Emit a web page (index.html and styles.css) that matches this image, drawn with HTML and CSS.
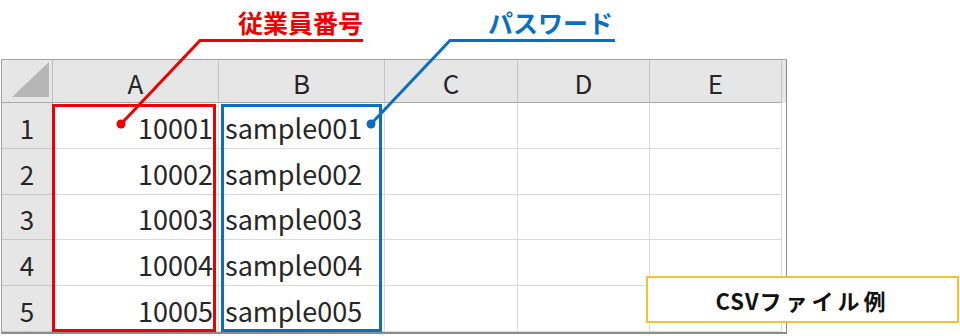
FILE: index.html
```html
<!DOCTYPE html>
<html lang="ja">
<head>
    <meta charset="UTF-8">
    <title>CSVファイル例</title>
    <link rel="stylesheet" href="styles.css">
</head>
<body>
<div class="figure">
    <!-- 見出しラベル -->
    <div class="callouts">
        <div class="callout callout-red">従業員番号</div>
        <div class="callout callout-blue">パスワード</div>
    </div>

    <!-- シート -->
    <div class="sheet">
        <div class="corner"><span class="corner-mark"></span></div>
        <div class="col-head">A</div>
        <div class="col-head">B</div>
        <div class="col-head">C</div>
        <div class="col-head">D</div>
        <div class="col-head">E</div>

        <div class="row-head">1</div>
        <div class="cell num">10001</div>
        <div class="cell">sample001</div>
        <div class="cell"></div><div class="cell"></div><div class="cell"></div>

        <div class="row-head">2</div>
        <div class="cell num">10002</div>
        <div class="cell">sample002</div>
        <div class="cell"></div><div class="cell"></div><div class="cell"></div>

        <div class="row-head">3</div>
        <div class="cell num">10003</div>
        <div class="cell">sample003</div>
        <div class="cell"></div><div class="cell"></div><div class="cell"></div>

        <div class="row-head">4</div>
        <div class="cell num">10004</div>
        <div class="cell">sample004</div>
        <div class="cell"></div><div class="cell"></div><div class="cell"></div>

        <div class="row-head">5</div>
        <div class="cell num">10005</div>
        <div class="cell">sample005</div>
        <div class="cell"></div><div class="cell"></div><div class="cell"></div>
    </div>

    <!-- 引き出し線と枠 -->
    <svg class="leaders" width="960" height="336" viewBox="0 0 960 336">
        <rect x="53.5" y="105.5" width="161" height="225" fill="none" stroke="#ee0000" stroke-width="3"/>
        <rect x="222.5" y="105.5" width="158" height="225" fill="none" stroke="#0a6fc0" stroke-width="3"/>
        <polyline points="363,40.5 200,40.5 121,124" fill="none" stroke="#ee0000" stroke-width="3"/>
        <circle cx="121" cy="124" r="4.5" fill="#ee0000"/>
        <polyline points="615,40.5 450,40.5 371,124" fill="none" stroke="#0a6fc0" stroke-width="3"/>
        <circle cx="371" cy="124" r="4.5" fill="#0a6fc0"/>
    </svg>

    <div class="caption">CSV<span class="caption-kana">ファイル例</span></div>
</div>
</body>
</html>
```

FILE: styles.css
```css
body {
    margin: 0;
    background-color: #fff;
    font-family: "Noto Sans CJK JP", "Noto Sans", sans-serif;
}

.figure {
    position: relative;
    width: 960px;
    height: 336px;
    overflow: hidden;
}

.callouts {
    display: flex;
    gap: 87px;
    height: 59px;
    padding: 8px 0 0 200px;
    box-sizing: border-box;
}

.callout {
    width: 163px;
    text-align: right;
    font-size: 25px;
    line-height: 28px;
    font-weight: bold;
}
.callout-red {
    color: #ee0000;
}
.callout-blue {
    color: #0a6fc0;
}

.sheet {
    display: grid;
    grid-template-columns: 51px 166px 166px 133px 132px 132px;
    grid-template-rows: 43px 46px 46px 45px 46px 46px;
    width: max-content;
    margin-left: 1px;
    padding-right: 4px;
    border-top: 1px solid #a3a3a3;
    border-left: 1px solid #a3a3a3;
    border-right: 1px solid #8c8c8c;
    border-bottom: 2px solid #8c8c8c;
    background: linear-gradient(#e6e6e6 43px, #fff 43px);
    color: #262626;
    font-size: 26px;
}

.corner, .col-head, .row-head, .cell {
    box-sizing: border-box;
    display: flex;
    align-items: center;
}

.corner {
    justify-content: flex-end;
    align-items: flex-end;
    padding: 0 3px 5px 0;
    background-color: #e6e6e6;
    border-right: 1px solid #bcbcbc;
    border-bottom: 1px solid #a8a8a8;
}
.corner-mark {
    width: 37px;
    height: 35px;
    background-color: #b6b6b6;
    clip-path: polygon(100% 0, 100% 100%, 0 100%);
}

.col-head {
    justify-content: center;
    background-color: #e6e6e6;
    border-right: 1px solid #c4c4c4;
    border-bottom: 1px solid #a8a8a8;
    padding-top: 2px;
}

.row-head {
    justify-content: center;
    background-color: #e6e6e6;
    border-right: 1px solid #a8a8a8;
    border-bottom: 1px solid #c8c8c8;
    padding-top: 3px;
}

.cell {
    background-color: #fff;
    border-right: 1px solid #dadada;
    border-bottom: 1px solid #dadada;
    padding: 3px 6px 0;
    font-size: 27px;
    white-space: nowrap;
}
.cell.num {
    justify-content: flex-end;
    padding-right: 5px;
}

.leaders {
    position: absolute;
    top: 0;
    left: 0;
    pointer-events: none;
}

.caption {
    position: absolute;
    left: 646px;
    top: 276px;
    width: 313px;
    height: 47px;
    box-sizing: border-box;
    border: 2px solid #f3c236;
    background-color: #fff;
    display: flex;
    align-items: center;
    justify-content: center;
    font-size: 22px;
    font-weight: bold;
    letter-spacing: 1px;
    color: #111;
}
.caption-kana {
    letter-spacing: 4px;
}
```
